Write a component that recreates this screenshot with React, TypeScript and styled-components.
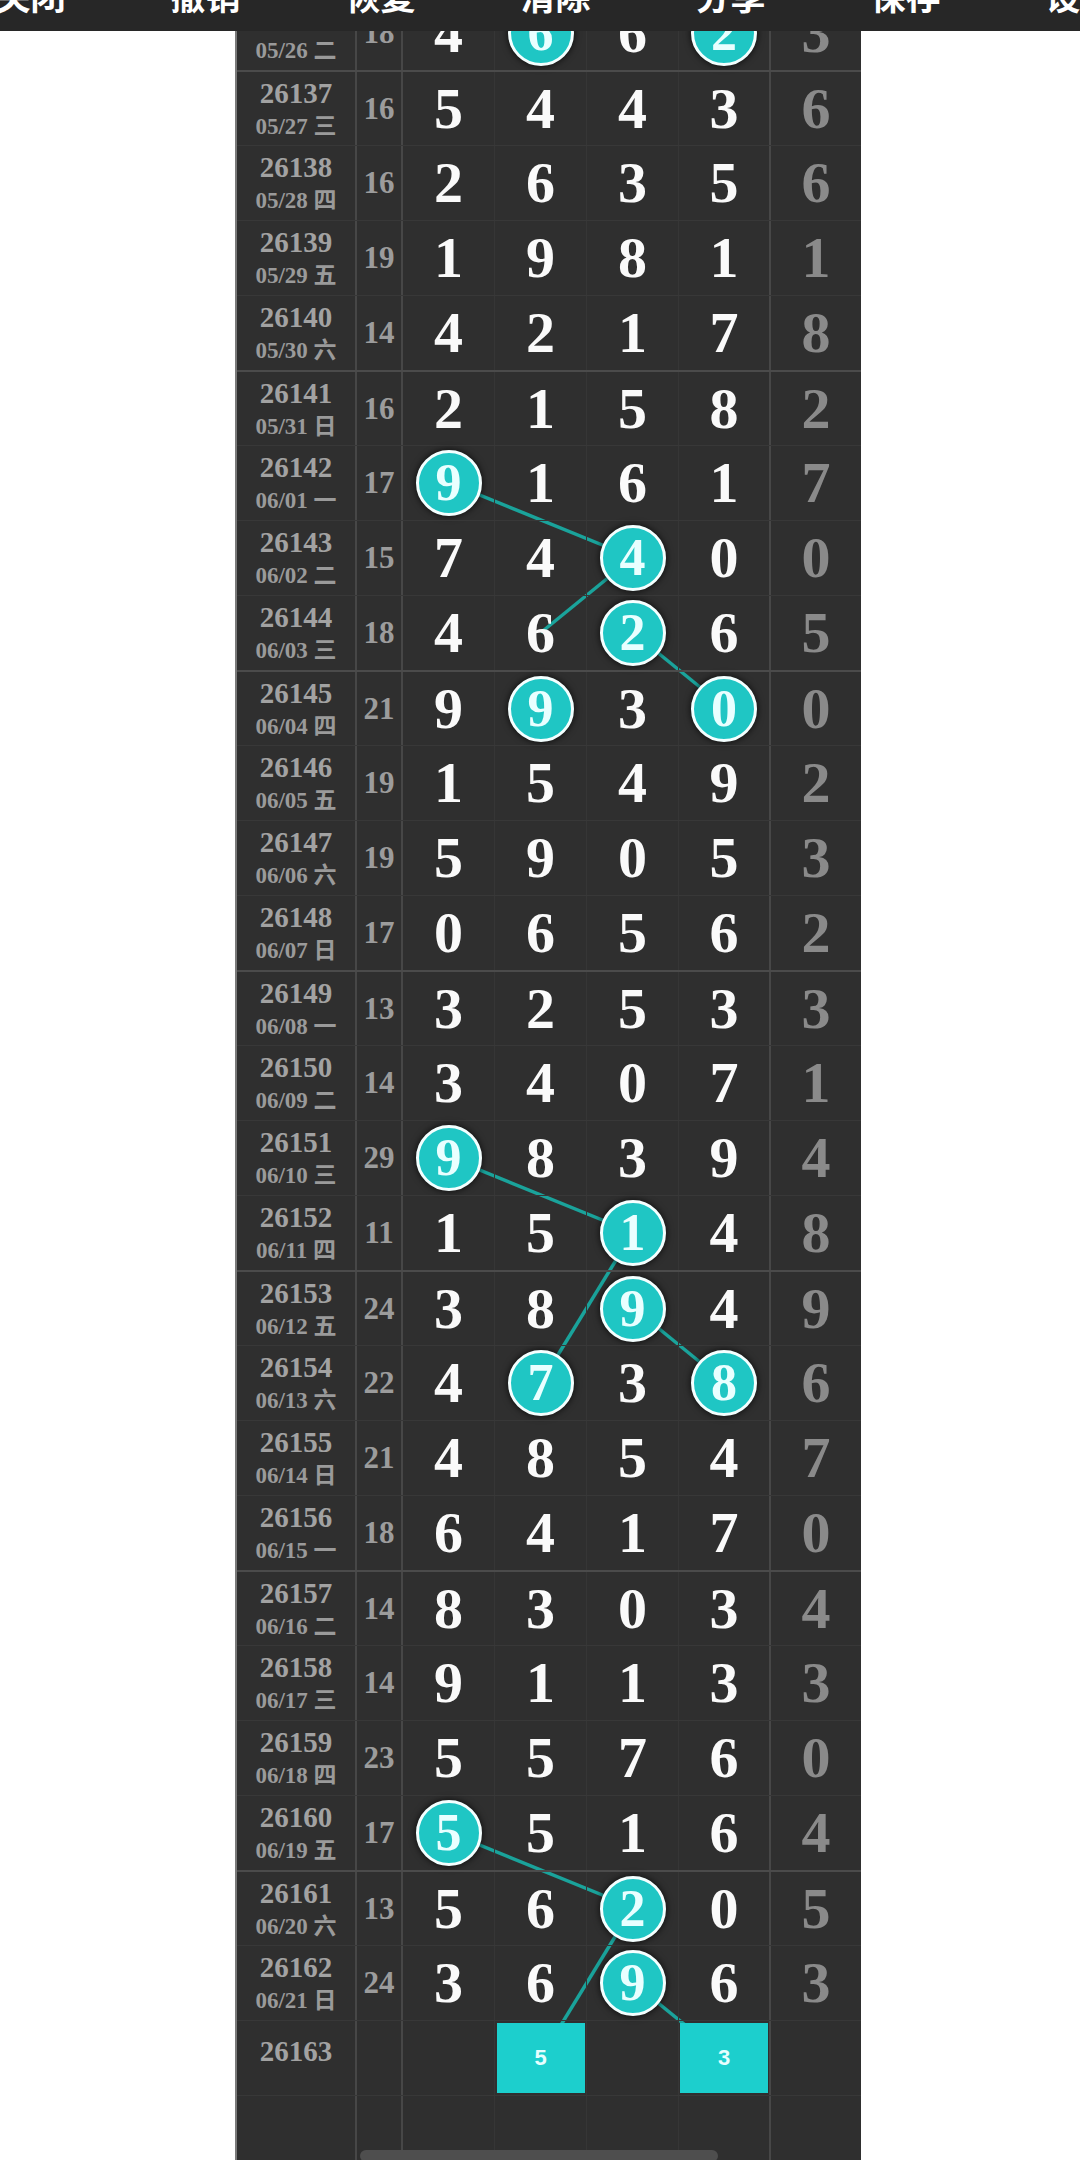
import * as React from 'react';
import styled, {createGlobalStyle} from 'styled-components';

type Draw = {issue: string; date: string; sum: string; nums: string; hits: number[]; tail: string};

const ROW_H = 75
const COLS = [120, 46, 92, 92, 92, 92, 90]
const digitX = (col: number) => COLS[0] + COLS[1] + 92 * col + 46
const rowY = (row: number) => ROW_H * row + ROW_H / 2

const draws: Draw[] = [
  {issue: '26136', date: '05/26 二', sum: '18', nums: '4662', hits: [1, 3], tail: '3'},
  {issue: '26137', date: '05/27 三', sum: '16', nums: '5443', hits: [], tail: '6'},
  {issue: '26138', date: '05/28 四', sum: '16', nums: '2635', hits: [], tail: '6'},
  {issue: '26139', date: '05/29 五', sum: '19', nums: '1981', hits: [], tail: '1'},
  {issue: '26140', date: '05/30 六', sum: '14', nums: '4217', hits: [], tail: '8'},
  {issue: '26141', date: '05/31 日', sum: '16', nums: '2158', hits: [], tail: '2'},
  {issue: '26142', date: '06/01 一', sum: '17', nums: '9161', hits: [0], tail: '7'},
  {issue: '26143', date: '06/02 二', sum: '15', nums: '7440', hits: [2], tail: '0'},
  {issue: '26144', date: '06/03 三', sum: '18', nums: '4626', hits: [2], tail: '5'},
  {issue: '26145', date: '06/04 四', sum: '21', nums: '9930', hits: [1, 3], tail: '0'},
  {issue: '26146', date: '06/05 五', sum: '19', nums: '1549', hits: [], tail: '2'},
  {issue: '26147', date: '06/06 六', sum: '19', nums: '5905', hits: [], tail: '3'},
  {issue: '26148', date: '06/07 日', sum: '17', nums: '0656', hits: [], tail: '2'},
  {issue: '26149', date: '06/08 一', sum: '13', nums: '3253', hits: [], tail: '3'},
  {issue: '26150', date: '06/09 二', sum: '14', nums: '3407', hits: [], tail: '1'},
  {issue: '26151', date: '06/10 三', sum: '29', nums: '9839', hits: [0], tail: '4'},
  {issue: '26152', date: '06/11 四', sum: '11', nums: '1514', hits: [2], tail: '8'},
  {issue: '26153', date: '06/12 五', sum: '24', nums: '3894', hits: [2], tail: '9'},
  {issue: '26154', date: '06/13 六', sum: '22', nums: '4738', hits: [1, 3], tail: '6'},
  {issue: '26155', date: '06/14 日', sum: '21', nums: '4854', hits: [], tail: '7'},
  {issue: '26156', date: '06/15 一', sum: '18', nums: '6417', hits: [], tail: '0'},
  {issue: '26157', date: '06/16 二', sum: '14', nums: '8303', hits: [], tail: '4'},
  {issue: '26158', date: '06/17 三', sum: '14', nums: '9113', hits: [], tail: '3'},
  {issue: '26159', date: '06/18 四', sum: '23', nums: '5576', hits: [], tail: '0'},
  {issue: '26160', date: '06/19 五', sum: '17', nums: '5516', hits: [0], tail: '4'},
  {issue: '26161', date: '06/20 六', sum: '13', nums: '5620', hits: [2], tail: '5'},
  {issue: '26162', date: '06/21 日', sum: '24', nums: '3696', hits: [2], tail: '3'},
]

// 预测行: 第几列 -> 数字
const predict: {[col: number]: string} = {1: '5', 3: '3'}

// 连线 [行, 列] -> [行, 列]
const links: [number, number, number, number][] = [
  [6, 0, 7, 2], [7, 2, 8, 1], [8, 2, 9, 3],
  [15, 0, 16, 2], [16, 2, 18, 1], [17, 2, 18, 3],
  [24, 0, 25, 2], [25, 2, 27, 1], [26, 2, 27, 3],
]

const tools = ['关闭', '撤销', '恢复', '清除', '分享', '保存', '设置']

const GlobalStyle = createGlobalStyle`
  html, body { margin: 0; padding: 0; background: #fff; }
  body { height: 2160px; overflow: hidden; font-family: "Liberation Serif", "Noto Sans CJK SC", serif; }
`

const Toolbar = styled.div`
  position: fixed;
  top: 0; left: 0; right: 0;
  height: 31px;
  background: #272727;
  display: flex;
  align-items: flex-start;
  overflow: hidden;
  z-index: 10;
`
const Tool = styled.div`
  flex: 0 0 175px;
  margin-top: -22px;
  text-align: center;
  font-family: "Noto Sans CJK SC", sans-serif;
  font-weight: 700;
  font-size: 35px;
  line-height: 34px;
  color: #fff;
  &:first-child{ margin-left: -57px; }
`

const Board = styled.div`
  position: relative;
  width: 624px;
  margin: -5px 0 0 235px;
  border-left: 2px solid #7a7a7a;
  background: #2f2f2f;
`
const Lines = styled.svg`
  position: absolute;
  left: 0; top: 0;
  z-index: 0;
`
const Row = styled.div<{$group: boolean}>`
  position: relative;
  z-index: 1;
  display: grid;
  grid-template-columns: ${COLS.map(c => c + 'px').join(' ')};
  height: ${ROW_H}px;
  box-sizing: border-box;
  border-top: ${p => p.$group ? '2px solid #4b4b4b' : '1px solid #383838'};
`
const IssueCell = styled.div<{$solo?: boolean}>`
  display: flex;
  flex-direction: column;
  align-items: center;
  padding-top: ${p => p.$solo ? 14 : 5}px;
  border-right: 2px solid #474747;
  color: #a2a2a2;
  font-weight: 700;
  > .no{ font-size: 29px; line-height: 32px; }
  > .date{ font-size: 23px; line-height: 28px; margin-top: 4px; color: #9a9a9a; }
`
const SumCell = styled.div`
  display: flex;
  align-items: center;
  justify-content: center;
  border-right: 2px solid #474747;
  color: #9c9c9c;
  font-weight: 700;
  font-size: 31px;
`
const DigitCell = styled.div<{$last?: boolean; $tail?: boolean}>`
  display: flex;
  align-items: center;
  justify-content: center;
  border-right: ${p => p.$last ? '2px solid #474747' : p.$tail ? 'none' : '1px solid #363636'};
  color: ${p => p.$tail ? '#8a8a8a' : '#fafafa'};
  font-weight: 700;
  font-size: 58px;
  line-height: 1;
`
const Ball = styled.span`
  width: 66px;
  height: 66px;
  box-sizing: border-box;
  border-radius: 50%;
  border: 3px solid #f4ffff;
  background: #1fc6c4;
  box-shadow: 0 0 6px 1px rgba(0,0,0,.6);
  display: flex;
  align-items: center;
  justify-content: center;
  color: #e9ffff;
  font-size: 52px;
`
const Square = styled.span`
  width: 88px;
  height: 70px;
  background: #1ccfcd;
  display: flex;
  align-items: center;
  justify-content: center;
  color: #e6ffff;
  font-family: "Liberation Sans", sans-serif;
  font-weight: 700;
  font-size: 22px;
`
const Scroll = styled.div`
  position: fixed;
  top: 2150px;
  left: 360px;
  width: 358px;
  height: 12px;
  border-radius: 6px;
  background: #4e4e4e;
  z-index: 5;
`

const isGroup = (issue: number) => (issue - 26137) % 4 === 0

export default function App() {
  const total = draws.length + 2
  return (
    <>
      <GlobalStyle/>
      <Toolbar>
        {tools.map(t => <Tool key={t}>{t}</Tool>)}
      </Toolbar>
      <Board>
        <Lines width={624} height={total * ROW_H}>
          {links.map(([r1, c1, r2, c2], i) =>
            <line key={i} x1={digitX(c1)} y1={rowY(r1)} x2={digitX(c2)} y2={rowY(r2)}
                  stroke="#1aa39b" strokeWidth={3.5}/>
          )}
        </Lines>
        {draws.map(d =>
          <Row key={d.issue} $group={isGroup(parseInt(d.issue))}>
            <IssueCell>
              <span className="no">{d.issue}</span>
              <span className="date">{d.date}</span>
            </IssueCell>
            <SumCell>{d.sum}</SumCell>
            {d.nums.split('').map((n, i) =>
              <DigitCell key={i} $last={i === 3}>
                {d.hits.includes(i) ? <Ball>{n}</Ball> : n}
              </DigitCell>
            )}
            <DigitCell $tail>{d.tail}</DigitCell>
          </Row>
        )}
        <Row $group={false}>
          <IssueCell $solo><span className="no">26163</span></IssueCell>
          <SumCell/>
          {[0, 1, 2, 3].map(i =>
            <DigitCell key={i} $last={i === 3}>
              {predict[i] && <Square>{predict[i]}</Square>}
            </DigitCell>
          )}
          <DigitCell $tail/>
        </Row>
        <Row $group={isGroup(26164)}>
          <IssueCell/>
          <SumCell/>
          {[0, 1, 2, 3].map(i => <DigitCell key={i} $last={i === 3}/>)}
          <DigitCell $tail/>
        </Row>
      </Board>
      <Scroll/>
    </>
  )
}
